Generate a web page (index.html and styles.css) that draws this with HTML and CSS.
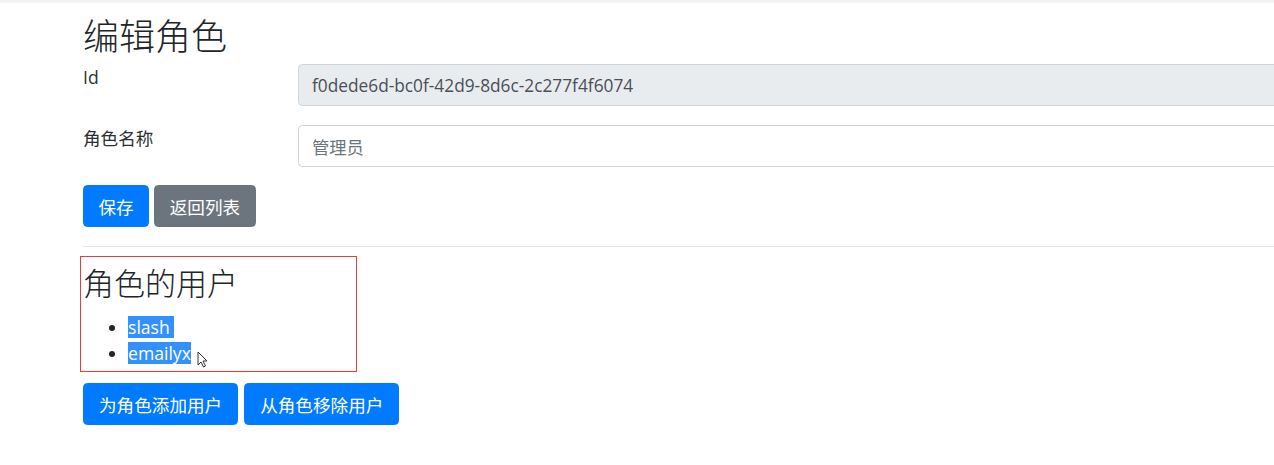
FILE: index.html
```html
<!DOCTYPE html>
<html lang="zh-CN">
<head>
<meta charset="utf-8">
<title>编辑角色</title>
<link rel="stylesheet" href="styles.css">
</head>
<body>
<div class="topband"></div>
<main class="page">
  <h2 class="title">编辑角色</h2>
  <form class="form">
    <div class="row">
      <label class="label">Id</label>
      <input class="input input-disabled" type="text" value="f0dede6d-bc0f-42d9-8d6c-2c277f4f6074" disabled>
    </div>
    <div class="row">
      <label class="label">角色名称</label>
      <input class="input" type="text" value="管理员">
    </div>
    <div class="actions">
      <button type="button" class="btn btn-primary">保存</button>
      <button type="button" class="btn btn-secondary">返回列表</button>
    </div>
  </form>
  <hr class="divider">
  <section class="users">
    <h3 class="subtitle">角色的用户</h3>
    <ul class="user-list">
      <li><span class="sel">slash&nbsp;</span></li>
      <li><span class="sel">emailyx</span><svg class="cursor" width="12" height="17" viewBox="0 0 12 17"><path d="M1 1 L1 14 L4 11 L6.5 16 L8.5 15 L6 10 L10 10 Z" fill="#fff" stroke="#333" stroke-width="1" stroke-linejoin="round"/></svg></li>
    </ul>
  </section>
  <div class="actions bottom">
    <button type="button" class="btn btn-primary wide">为角色添加用户</button>
    <button type="button" class="btn btn-primary wide">从角色移除用户</button>
  </div>
</main>
</body>
</html>
```
FILE: styles.css
```css
html, body {
  margin: 0;
  padding: 0;
  background: #fff;
  overflow: hidden;
}
body {
  font-family: "Open Sans", "Noto Sans CJK SC", sans-serif;
  font-size: 17.6px;
  line-height: 1.5;
  color: #212529;
  width: 1274px;
  height: 465px;
}
.topband {
  height: 3px;
  background: linear-gradient(#efefef, #f8f8f8);
}
.page {
  width: 1320px;
  padding-left: 83px;
  box-sizing: border-box;
}
.title {
  margin: 10px 0 8px;
  font-size: 36px;
  font-weight: 300;
  line-height: 1.2;
  font-family: "Noto Sans CJK SC", sans-serif;
}
.form {
  display: flex;
  flex-direction: column;
}
.row {
  display: flex;
  align-items: flex-start;
  margin-bottom: 19px;
}
.label {
  width: 215px;
  flex: none;
  line-height: 26.4px;
  font-family: "Open Sans", "Noto Sans CJK SC", sans-serif;
  font-size: 17.6px;
  color: #2b2f33;
}
.input {
  flex: 1;
  height: 42px;
  box-sizing: border-box;
  padding: 6px 13px;
  font-family: "Open Sans", "Noto Sans CJK SC", sans-serif;
  font-size: 17.3px;
  color: #495057;
  background: #fff;
  border: 1px solid #ced4da;
  border-radius: 4.4px;
  outline: none;
}
.input-disabled {
  background: #e9ecef;
  color: #495057;
  -webkit-text-fill-color: #495057;
  opacity: 1;
}
.input:not(.input-disabled) {
  color: #6c757d;
}
.actions {
  display: flex;
  gap: 5px;
  margin-top: -1px;
}
.btn {
  height: 42px;
  box-sizing: border-box;
  padding: 0 14.5px;
  font-family: "Open Sans", "Noto Sans CJK SC", sans-serif;
  font-size: 17.6px;
  color: #fff;
  border: 1px solid transparent;
  border-radius: 4.4px;
  cursor: pointer;
}
.btn.wide {
  padding: 0 15px;
}
.btn-primary {
  background: #007bff;
  border-color: #007bff;
}
.btn-secondary {
  background: #6c757d;
  border-color: #6c757d;
}
.divider {
  margin: 19px 0 9px;
  border: 0;
  border-top: 1px solid #e6e6e6;
}
.users {
  width: 273px;
  margin-left: -3px;
  padding-left: 2px;
  border: 1px solid #f03a3a;
}
.subtitle {
  margin: 6px 0 16px;
  font-size: 31px;
  font-weight: 300;
  line-height: 1.2;
  font-family: "Noto Sans CJK SC", sans-serif;
}
.user-list {
  margin: 0 0 4px;
  padding-left: 45px;
}
.user-list li {
  height: 25.5px;
  line-height: 22px;
}
.sel {
  display: inline-block;
  line-height: 22px;
  background: #3391ff;
  color: #fff;
}
.cursor {
  vertical-align: -8px;
  margin-left: 6px;
}
.bottom {
  margin-top: 11px;
  gap: 6px;
}
```
